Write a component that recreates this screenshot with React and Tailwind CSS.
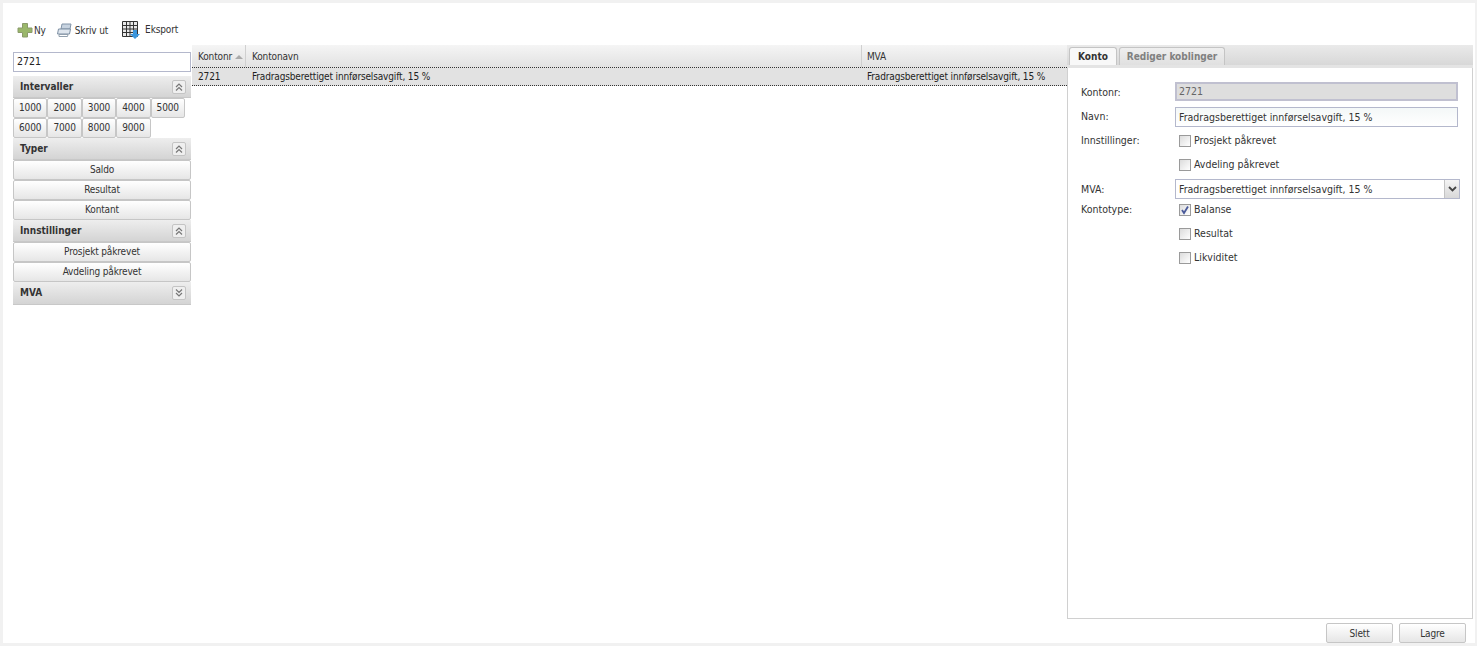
function Chevron({ up }) {
  return (
    <span className="w-[14px] h-[14px] border border-[#c4c4c4] rounded-[2px] bg-[#efefef] flex items-center justify-center">
      <svg width="8" height="8" viewBox="0 0 8 8" fill="none" stroke="#777" strokeWidth="1.2">
        {up ? <path d="M1 4l3-3 3 3M1 7.5l3-3 3 3" /> : <path d="M1 .5l3 3 3-3M1 4l3 3 3-3" />}
      </svg>
    </span>
  );
}
function Head({ title, up = true, className = "h-[22px]" }) {
  return (
    <div className={"bg-gradient-to-b from-[#eeeeee] to-[#d4d4d4] border-b border-[#c8c8c8] flex items-center justify-between pl-[7px] pr-[5px] font-bold text-[#333] text-[10px] " + className}>
      <span>{title}</span>
      <Chevron up={up} />
    </div>
  );
}
function Btn({ children, className = "h-[20px] pb-[1px]" }) {
  return (
    <div className={"flex items-center justify-center border border-[#c6c6c6] rounded-[2px] bg-gradient-to-b from-white to-[#e6e6e6] text-[#333] text-[10px] tracking-[-0.15px] " + className}>
      {children}
    </div>
  );
}
function Check({ label, checked }) {
  return (
    <div className="h-[24px] flex items-center">
      <span className="ml-[4px] w-[12px] h-[12px] border border-[#9a9a9a] bg-gradient-to-br from-[#dcdcdc] to-white flex items-center justify-center">
        {checked && (
          <svg width="10" height="10" viewBox="0 0 10 10" fill="none" stroke="#4a5a9a" strokeWidth="1.8"><path d="M2 5l2 3 4-6.5" /></svg>
        )}
      </span>
      <span className="ml-[3px]">{label}</span>
    </div>
  );
}
export default function App() {
  return (
    <div className="w-[1477px] h-[646px] overflow-hidden bg-[#f1f1f1] pt-[3px] pl-[3px] pr-[2px] pb-[3px] text-[10.5px] text-[#222] font-['DejaVu_Sans_Condensed','DejaVu_Sans',sans-serif]">
      <div className="h-[640px] bg-white flex flex-col">
        <div className="h-[42px] flex items-start pt-[17px] pl-[14px] shrink-0 text-[10px] tracking-[-0.15px]">
          <div className="flex items-center h-[20px] gap-[1px]">
            <svg width="16" height="16" viewBox="0 0 16 16"><path d="M5.5 1.5h5v4.5h4.5v4.5h-4.5v4.5h-5v-4.5H1V6h4.5z" fill="#9ab76a" stroke="#8a9a6a" /></svg>
            <span className="text-[#333]">Ny</span>
          </div>
          <div className="flex items-center h-[20px] gap-[2px] ml-[11px]">
            <svg width="16" height="16" viewBox="0 0 16 16"><path d="M5 2h9l-1 5H4z" fill="#c7d3e0" stroke="#8294a8" /><path d="M1.5 7h12l-1 5h-12z" fill="#dfe6ee" stroke="#7d8fa3" /><path d="M2 12.5h9l-.5 2H2z" fill="#fff" stroke="#92a0ae" /></svg>
            <span className="text-[#333]">Skriv ut</span>
          </div>
          <div className="flex items-center h-[20px] gap-[4px] ml-[13px]">
            <svg width="20" height="20" viewBox="0 0 20 20">
              <path d="M1.5 1.5h15v15h-15z" fill="#e8e8e8" stroke="#333" />
              <path d="M1 5.5h16M1 9h16M1 12.5h16M5.5 1v16M9 1v16M12.5 1v16" stroke="#333" strokeWidth="1" />
              <path d="M12 10h4v4h3l-5 5-5-5h3z" fill="#3a95dc" />
            </svg>
            <span className="text-[#333] mb-[1px]">Eksport</span>
          </div>
        </div>
        <div className="flex h-[574px] shrink-0">
          <div className="w-[178px] ml-[10px] mr-[1px] shrink-0 pt-[7px]">
            <div className="h-[20px] border border-[#b4b8cc] bg-white flex items-center px-[3px] text-[#222]">2721</div>
            <div className="mt-[4px]">
              <Head title="Intervaller" />
              <div className="flex flex-wrap w-[172px]">
                {["1000", "2000", "3000", "4000", "5000"].map((n) => (
                  <Btn key={n} className="w-[34.4px] h-[20px] pb-[1px]">{n}</Btn>
                ))}
                {["6000", "7000", "8000", "9000"].map((n) => (
                  <Btn key={n} className="w-[34.4px] h-[20px] pb-[2px]">{n}</Btn>
                ))}
              </div>
              <Head title="Typer" />
              <Btn>Saldo</Btn>
              <Btn>Resultat</Btn>
              <Btn>Kontant</Btn>
              <Head title="Innstillinger" />
              <Btn>Prosjekt påkrevet</Btn>
              <Btn>Avdeling påkrevet</Btn>
              <Head title="MVA" up={false} className="h-[23px] pb-[1px]" />
            </div>
          </div>
          <div className="w-[875px] shrink-0 text-[10px] tracking-[-0.15px]">
            <div className="h-[22px] flex bg-gradient-to-b from-[#f5f5f5] to-[#e2e2e2] text-[#333]">
              <div className="w-[54px] border-r border-[#d0d0d0] flex items-center pl-[6px]">
                Kontonr
                <svg width="8" height="5" viewBox="0 0 8 5" className="ml-[3px]"><path d="M0 5l4-4 4 4z" fill="#aaa" /></svg>
              </div>
              <div className="w-[616px] border-r border-[#d0d0d0] flex items-center pl-[6px]">Kontonavn</div>
              <div className="flex-1 flex items-center pl-[5px]">MVA</div>
            </div>
            <div className="h-[19px] flex bg-[#e2e2e2] border-y border-dotted border-[#333] text-[#222]">
              <div className="w-[54px] flex items-center pl-[6px]">2721</div>
              <div className="w-[615px] flex items-center pl-[6px]">Fradragsberettiget innførselsavgift, 15 %</div>
              <div className="flex-1 flex items-center pl-[6px]">Fradragsberettiget innførselsavgift, 15 %</div>
            </div>
          </div>
          <div className="w-[406px] shrink-0 flex flex-col">
            <div className="h-[23px] bg-gradient-to-b from-[#eaeaea] to-[#d8d8d8] flex items-end pl-[2px] gap-[2px] border-b-[3px] border-[#e4e4e4] text-[10px]">
              <div className="h-[18px] w-[48px] bg-[#f8f8f8] border border-b-0 border-[#c4c4c4] rounded-t-[3px] flex items-center justify-center font-bold text-[#333]">Konto</div>
              <div className="h-[18px] w-[106px] bg-gradient-to-b from-[#efefef] to-[#e0e0e0] border border-b-0 border-[#c4c4c4] rounded-t-[3px] flex items-center justify-center font-bold text-[#808080]">Rediger koblinger</div>
            </div>
            <div className="h-[551px] border-x border-b border-[#d0d0d0] pt-[14px] pl-[13px] text-[#333]">
              <div className="grid grid-cols-[94px_1fr]">
                <div className="h-[20px] flex items-center pt-[2px]">Kontonr:</div>
                <div className="h-[19px] w-[283px] border-2 border-[#c0c0d0] bg-[#dedede] flex items-center px-[2px] pt-[1px] text-[#666]">2721</div>
                <div className="h-[20px] mt-[4px] flex items-center pt-[2px]">Navn:</div>
                <div className="h-[20px] mt-[5px] w-[283px] border border-[#b4b8cc] bg-gradient-to-b from-[#f4f8f8] to-white flex items-center px-[3px] pt-[1px]">Fradragsberettiget innførselsavgift, 15 %</div>
                <div className="h-[24px] mt-[2px] flex items-center">Innstillinger:</div>
                <div className="mt-[2px]"><Check label="Prosjekt påkrevet" /><Check label="Avdeling påkrevet" /></div>
                <div className="h-[20px] mt-[2px] flex items-center pt-[2px]">MVA:</div>
                <div className="h-[20px] mt-[2px] w-[285px] border border-[#b4b8cc] bg-white flex items-center pl-[3px] justify-between">
                  <span className="pt-[1px]">Fradragsberettiget innførselsavgift, 15 %</span>
                  <span className="w-[15px] h-full bg-gradient-to-b from-[#f4f4f4] to-[#d8d8d8] border-l border-[#c4c4c4] flex items-center justify-center">
                    <svg width="9" height="6" viewBox="0 0 9 6" fill="none" stroke="#444" strokeWidth="1.8"><path d="M1 1l3.5 3.5L8 1" /></svg>
                  </span>
                </div>
                <div className="h-[20px] mt-[1px] flex items-center">Kontotype:</div>
                <div className="-mt-[1px]"><Check label="Balanse" checked /><Check label="Resultat" /><Check label="Likviditet" /></div>
              </div>
            </div>
          </div>
        </div>
        <div className="flex-1 flex justify-end gap-[6px] pt-[4px] pr-[9px]">
          <Btn className="w-[67px] h-[20px]">Slett</Btn>
          <Btn className="w-[67px] h-[20px]">Lagre</Btn>
        </div>
      </div>
    </div>
  );
}
